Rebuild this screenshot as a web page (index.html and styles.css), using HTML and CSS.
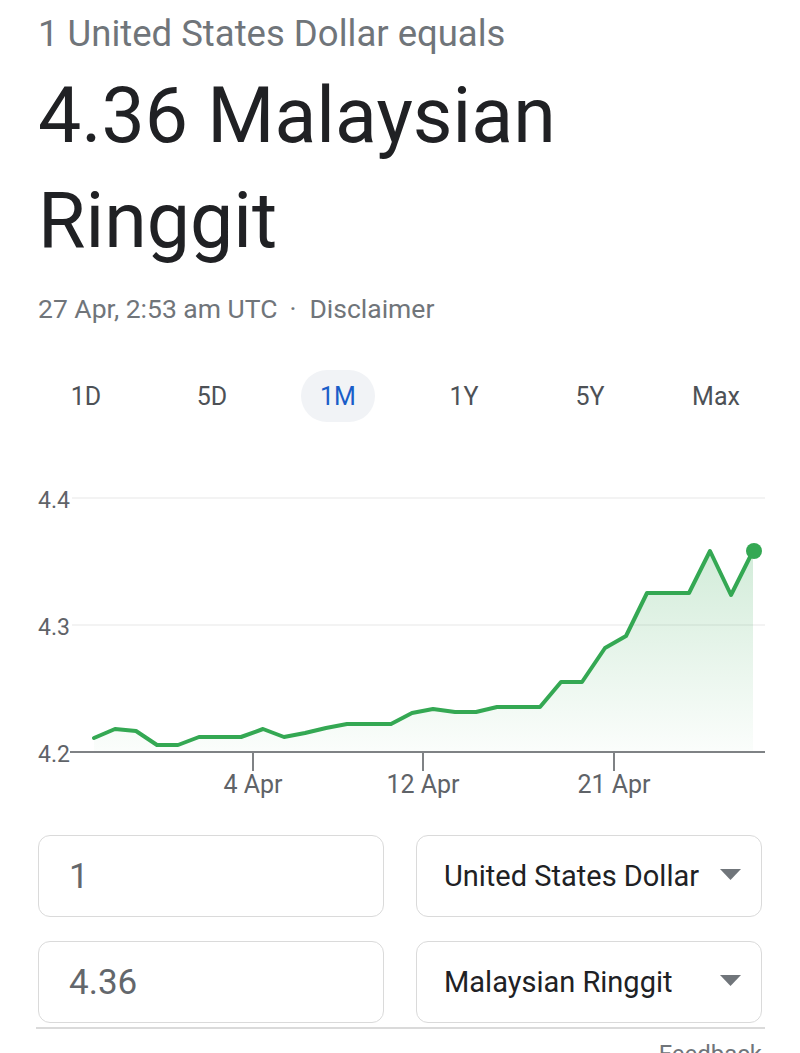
FILE: index.html
```html
<!DOCTYPE html>
<html lang="en">
<head>
    <meta charset="UTF-8">
    <meta name="viewport" content="width=device-width, initial-scale=1.0">
    <title>USD to MYR</title>
    <link rel="stylesheet" href="styles.css">
</head>
<body>
    <!-- Rate summary -->
    <div class="summary">
        <div class="lead">1 United States Dollar equals</div>
        <div class="rate">4.36 Malaysian Ringgit</div>
        <div class="stamp">27 Apr, 2:53 am UTC<span class="sep">·</span><span class="disclaimer">Disclaimer</span></div>
    </div>

    <!-- Range tabs -->
    <div class="ranges">
        <div class="range">1D</div>
        <div class="range">5D</div>
        <div class="range active">1M</div>
        <div class="range">1Y</div>
        <div class="range">5Y</div>
        <div class="range">Max</div>
    </div>

    <!-- Chart -->
    <svg class="chart" viewBox="0 470 800 345" width="800" height="345">
        <defs>
            <linearGradient id="area" x1="0" y1="0" x2="0" y2="1">
                <stop offset="0" stop-color="#34a853" stop-opacity="0.22"/>
                <stop offset="1" stop-color="#34a853" stop-opacity="0.02"/>
            </linearGradient>
        </defs>
        <line class="grid" x1="72" y1="498" x2="765" y2="498"/>
        <line class="grid" x1="72" y1="625" x2="765" y2="625"/>
        <text class="ylabel" x="70" y="508">4.4</text>
        <text class="ylabel" x="70" y="635">4.3</text>
        <text class="ylabel" x="70" y="762">4.2</text>
        <path class="fill" d="M94 738 L115 729 L136 731 L157 745 L178 745 L199 737 L220 737 L241 737 L263 729 L284 737 L305 733 L326 728 L347 724 L368 724 L391 724 L412 713 L433 709 L455 712 L476 712 L497 707 L518 707 L540 707 L561 682 L582 682 L605 648 L626 636 L647 593 L668 593 L689 593 L710 551 L731 595 L753 551 L753 752 L94 752 Z"/>
        <line class="axis" x1="70" y1="752" x2="765" y2="752"/>
        <line class="axis" x1="253" y1="752" x2="253" y2="771"/>
        <line class="axis" x1="423" y1="752" x2="423" y2="771"/>
        <line class="axis" x1="614" y1="752" x2="614" y2="771"/>
        <polyline class="line" points="94,738 115,729 136,731 157,745 178,745 199,737 220,737 241,737 263,729 284,737 305,733 326,728 347,724 368,724 391,724 412,713 433,709 455,712 476,712 497,707 518,707 540,707 561,682 582,682 605,648 626,636 647,593 668,593 689,593 710,551 731,595 753,551"/>
        <circle class="dot" cx="754" cy="551" r="8"/>
        <text class="xlabel" x="253" y="793">4 Apr</text>
        <text class="xlabel" x="423" y="793">12 Apr</text>
        <text class="xlabel" x="614" y="793">21 Apr</text>
    </svg>

    <!-- Converter -->
    <div class="converter">
        <div class="box amount">1</div>
        <div class="box currency">
            <span>United States Dollar</span>
            <svg class="caret" viewBox="0 0 21 11" width="21" height="11"><polygon points="0,0 21,0 10.5,11"/></svg>
        </div>
        <div class="box amount">4.36</div>
        <div class="box currency">
            <span>Malaysian Ringgit</span>
            <svg class="caret" viewBox="0 0 21 11" width="21" height="11"><polygon points="0,0 21,0 10.5,11"/></svg>
        </div>
    </div>
    <div class="divider"></div>
    <div class="feedback">Feedback</div>
</body>
</html>
```

FILE: styles.css
```css
body{
    margin: 0;
    font-family: Roboto, "Noto Sans", sans-serif;
    background: #fff;
    color: #202124;
    overflow: hidden;
}
.summary{
    padding: 13px 38px 0 38px;
}
.lead{
    font-size: 36.5px;
    line-height: 42px;
    color: #70757a;
}
.rate{
    margin-top: 9px;
    font-size: 77px;
    line-height: 105px;
    color: #202124;
}
.stamp{
    margin-top: 20px;
    font-size: 26.5px;
    line-height: 30px;
    color: #70757a;
}
.sep{
    margin: 0 13px 0 12px;
}
.ranges{
    margin-top: 46px;
    padding-left: 23px;
    display: grid;
    grid-template-columns: repeat(6, 126px);
}
.range{
    justify-self: center;
    width: 74px;
    height: 52px;
    border-radius: 26px;
    display: flex;
    align-items: center;
    justify-content: center;
    font-size: 25px;
    color: #4d5156;
}
.range.active{
    background-color: #f1f3f6;
    color: #1a5dc8;
}
.chart{
    display: block;
    margin-top: 48px;
}
.grid{
    stroke: #efefef;
    stroke-width: 1.5;
}
.axis{
    stroke: #7f8285;
    stroke-width: 2;
}
.ylabel{
    font-family: Roboto, sans-serif;
    font-size: 23px;
    fill: #5f6368;
    text-anchor: end;
}
.xlabel{
    font-family: Roboto, sans-serif;
    font-size: 25px;
    fill: #5f6368;
    text-anchor: middle;
}
.fill{
    fill: url(#area);
}
.line{
    fill: none;
    stroke: #34a853;
    stroke-width: 4;
    stroke-linejoin: round;
    stroke-linecap: round;
}
.dot{
    fill: #34a853;
}
.converter{
    margin-top: 20px;
    padding: 0 38px;
    display: grid;
    grid-template-columns: 1fr 1fr;
    column-gap: 32px;
    row-gap: 24px;
}
.box{
    height: 82px;
    box-sizing: border-box;
    border: 1.5px solid #dadada;
    border-radius: 12px;
    display: flex;
    align-items: center;
}
.amount{
    padding-left: 30px;
    font-size: 35px;
    color: #63676c;
}
.currency{
    padding: 0 20px 0 27px;
    justify-content: space-between;
    font-size: 29px;
    color: #202124;
}
.caret{
    fill: #70757a;
    margin-top: -4px;
}
.divider{
    margin: 4px 35px 0 36px;
    height: 1.5px;
    background-color: #dadada;
}
.feedback{
    margin-top: 11px;
    padding-right: 38px;
    text-align: right;
    font-size: 24px;
    line-height: 28px;
    color: #70757a;
}
```
